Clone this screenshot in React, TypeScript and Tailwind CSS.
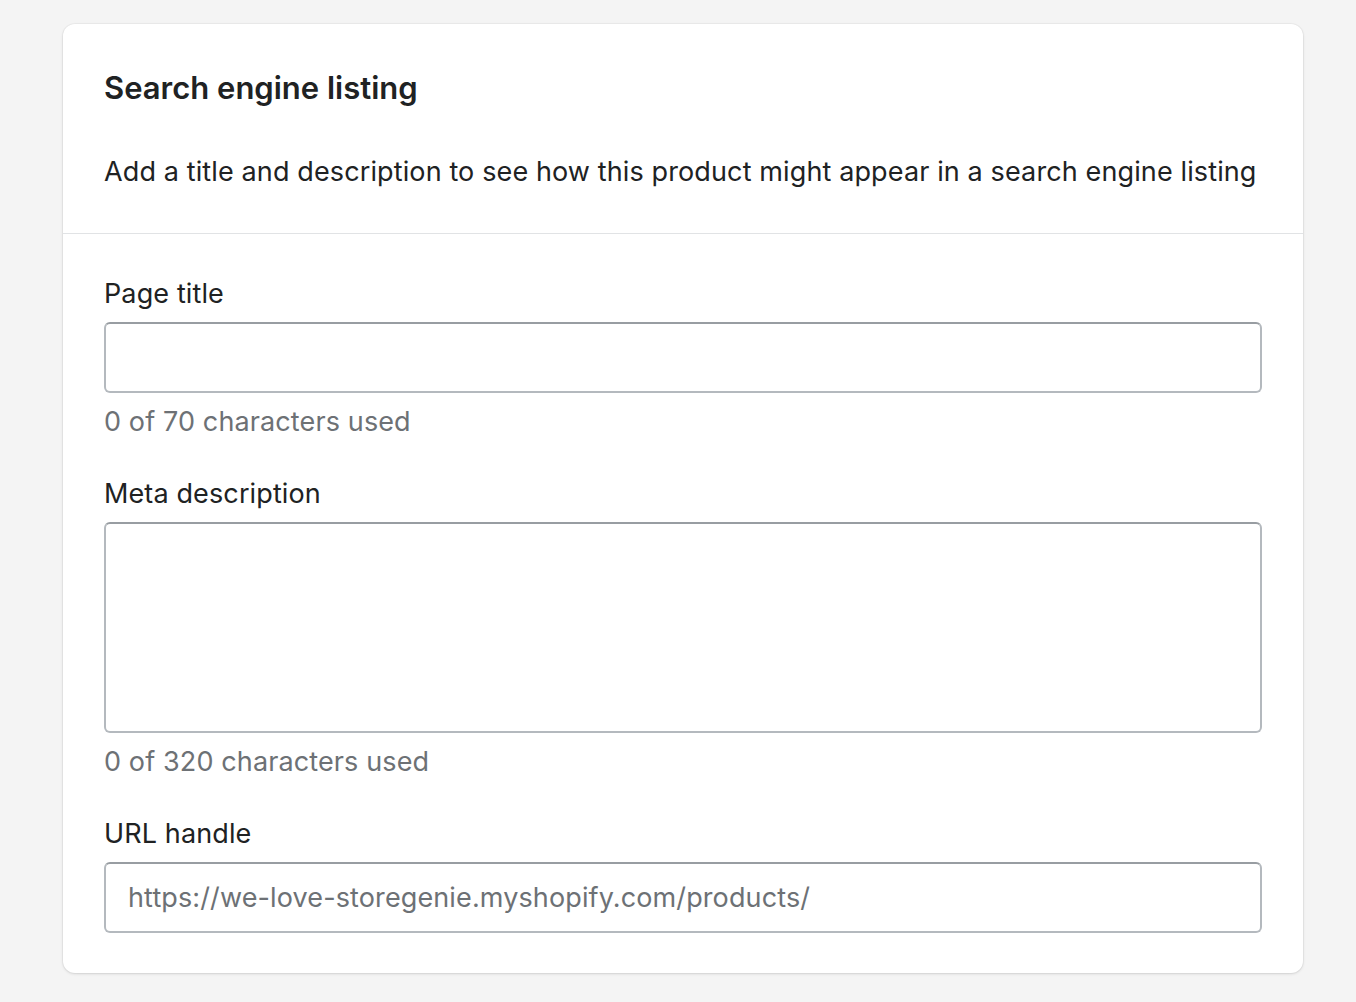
export default function App() {
  return (
    <div className="min-h-screen bg-[#f4f4f4] pt-[24px] px-[63px] text-[#202223]" style={{ fontFamily: 'Inter, "Noto Sans", sans-serif' }}>
      <div className="w-[1240px] rounded-[12px] bg-white shadow-[0_1px_3px_rgba(0,0,0,0.12),0_0_0_1px_rgba(0,0,0,0.03)]">
        <div className="px-[41px] pt-[44px] pb-[41px] border-b border-[#e1e3e5]">
          <h2 className="text-[31px] leading-[40px] font-semibold">Search engine listing</h2>
          <p className="mt-[44px] text-[27px] leading-[40px] tracking-[0.12px]">Add a title and description to see how this product might appear in a search engine listing</p>
        </div>
        <div className="px-[41px] pt-[40px] pb-[40px] text-[27px] leading-[40px] tracking-[0.12px]">
          <label className="block">Page title</label>
          <input type="text" className="mt-[8px] block w-full h-[71px] rounded-[6px] border-2 border-[#b4b9be] border-t-[#989da2] outline-none px-[24px]" />
          <p className="mt-[9px] text-[#6d7175]">0 of 70 characters used</p>

          <label className="block mt-[32px]">Meta description</label>
          <textarea className="mt-[8px] block w-full h-[211px] rounded-[6px] border-2 border-[#b4b9be] border-t-[#989da2] outline-none px-[24px] resize-none" />
          <p className="mt-[9px] text-[#6d7175]">0 of 320 characters used</p>

          <label className="block mt-[32px]">URL handle</label>
          <input type="text" placeholder="https://we-love-storegenie.myshopify.com/products/" className="mt-[8px] block w-full h-[71px] rounded-[6px] border-2 border-[#b4b9be] border-t-[#989da2] outline-none px-[22px] placeholder:text-[#6d7175]" />
        </div>
      </div>
    </div>
  );
}
